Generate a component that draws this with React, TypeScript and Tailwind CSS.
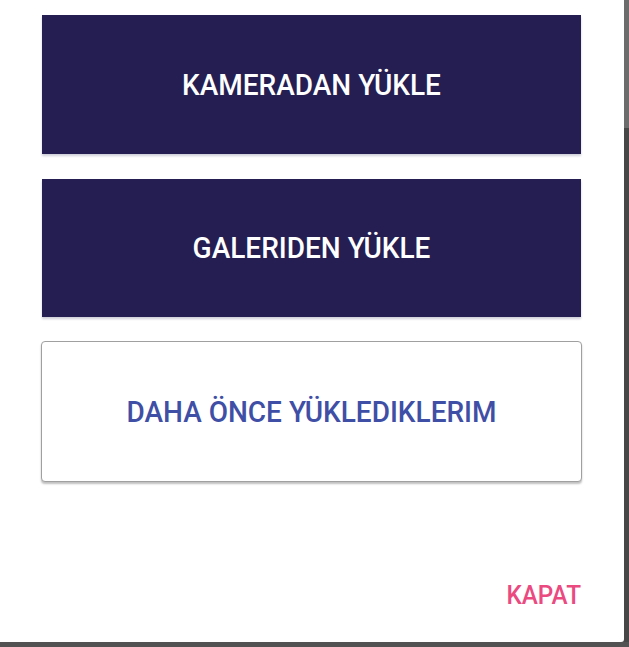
import React from "react";

export default function App() {
  const font = { fontFamily: "Roboto, 'Liberation Sans', sans-serif" };

  return (
    <div className="flex w-[629px] h-[647px] bg-[#525252]" style={font}>
      <div className="flex flex-col">
        {/* Dialog body */}
        <div className="flex flex-col w-[624px] h-[642px] bg-white rounded-br-[3px] pl-[42px] pt-[15px]">
          <button className="flex items-center justify-center w-[539px] h-[139px] bg-[#241e52] text-white text-[28px] font-medium shadow-[0_2px_2px_rgba(40,40,90,0.22)]">
            <span className="block scale-y-[1.05] translate-y-[1px]">KAMERADAN YÜKLE</span>
          </button>
          <button className="mt-[25px] flex items-center justify-center w-[539px] h-[138px] bg-[#241e52] text-white text-[28px] font-medium shadow-[0_2px_2px_rgba(40,40,90,0.22)]">
            <span className="block scale-y-[1.05] translate-y-[1px]">GALERIDEN YÜKLE</span>
          </button>
          <button className="mt-[24px] -ml-[1px] flex items-center justify-center w-[541px] h-[141px] bg-white border border-[#a0a0a0] rounded-[4px] text-[#3f4fa6] text-[28px] font-medium shadow-[0_2px_2px_rgba(0,0,0,0.25)]">
            <span className="block scale-y-[1.05] translate-y-[1px]">DAHA ÖNCE YÜKLEDIKLERIM</span>
          </button>
          <div className="flex justify-end w-[539px] mt-[100px]">
            <span className="block text-[#ea4a80] text-[24.3px] font-medium leading-[28px] scale-y-[1.05]">KAPAT</span>
          </div>
        </div>
      </div>
      {/* backdrop strip */}
      <div className="flex flex-col w-[5px] h-[642px]">
        <div className="h-[128px] bg-[#6c6c6c]" />
        <div className="flex-1 bg-[#474747]" />
      </div>
    </div>
  );
}
